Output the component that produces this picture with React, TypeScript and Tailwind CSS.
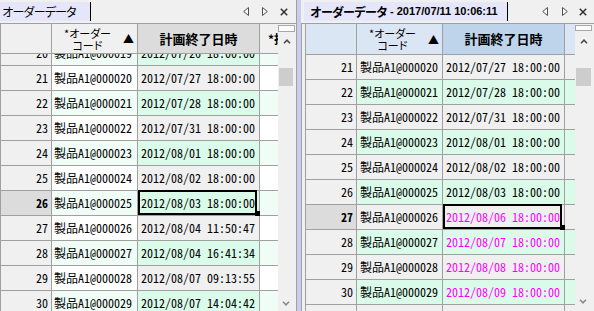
import React from "react";

const MONO = "font-['Noto_Sans_Mono_CJK_JP','Noto_Sans_CJK_JP',monospace]";
const JP = "font-['Noto_Sans_CJK_JP',sans-serif]";

type Row = { n: number; code: string; date: string; magenta?: boolean };

const leftRows: Row[] = [
  { n: 20, code: "製品A1@000019", date: "2012/07/26 18:00:00" },
  { n: 21, code: "製品A1@000020", date: "2012/07/27 18:00:00" },
  { n: 22, code: "製品A1@000021", date: "2012/07/28 18:00:00" },
  { n: 23, code: "製品A1@000022", date: "2012/07/31 18:00:00" },
  { n: 24, code: "製品A1@000023", date: "2012/08/01 18:00:00" },
  { n: 25, code: "製品A1@000024", date: "2012/08/02 18:00:00" },
  { n: 26, code: "製品A1@000025", date: "2012/08/03 18:00:00" },
  { n: 27, code: "製品A1@000026", date: "2012/08/04 11:50:47" },
  { n: 28, code: "製品A1@000027", date: "2012/08/04 16:41:34" },
  { n: 29, code: "製品A1@000028", date: "2012/08/07 09:13:55" },
  { n: 30, code: "製品A1@000029", date: "2012/08/07 14:04:42" },
];

const rightRows: Row[] = [
  { n: 21, code: "製品A1@000020", date: "2012/07/27 18:00:00" },
  { n: 22, code: "製品A1@000021", date: "2012/07/28 18:00:00" },
  { n: 23, code: "製品A1@000022", date: "2012/07/31 18:00:00" },
  { n: 24, code: "製品A1@000023", date: "2012/08/01 18:00:00" },
  { n: 25, code: "製品A1@000024", date: "2012/08/02 18:00:00" },
  { n: 26, code: "製品A1@000025", date: "2012/08/03 18:00:00" },
  { n: 27, code: "製品A1@000026", date: "2012/08/06 18:00:00", magenta: true },
  { n: 28, code: "製品A1@000027", date: "2012/08/07 18:00:00", magenta: true },
  { n: 29, code: "製品A1@000028", date: "2012/08/08 18:00:00", magenta: true },
  { n: 30, code: "製品A1@000029", date: "2012/08/09 18:00:00", magenta: true },
  { n: 31, code: "製品A1@000030", date: "2012/08/10 18:00:00", magenta: true },
];

function Chevron({ down, className }: { down?: boolean; className?: string }) {
  return (
    <svg width="8" height="5" viewBox="0 0 8 5" className={className}>
      {down ? (
        <polyline points="1,0.8 4,3.8 7,0.8" fill="none" stroke="#8a8a8a" strokeWidth="1.6" />
      ) : (
        <polyline points="1,4.2 4,1.2 7,4.2" fill="none" stroke="#4a4a4a" strokeWidth="1.6" />
      )}
    </svg>
  );
}

function VScroll({ right }: { right?: boolean }) {
  return (
    <div className="w-[17px] shrink-0 flex flex-col items-start bg-[#f0f0f0]">
      <div className={`mt-[1px] w-full border border-[#a8a8a8] bg-[#fbfbfb] ${right ? "h-[6px]" : "h-[7px]"}`} />
      <Chevron className={`${right ? "mt-[8px]" : "mt-[7px]"} ml-[5px]`} />
      <div className={`mt-[24px] ml-[1px] h-[18px] bg-[#cdcdcd] ${right ? "w-[15px]" : "w-[14px]"}`} />
      <div className="flex-1" />
      <Chevron down className={`${right ? "mb-[7px]" : "mb-[5px]"} ml-[4px]`} />
    </div>
  );
}

function TabButtons({ right }: { right?: boolean }) {
  return (
    <div className={`flex items-start mt-[7px] ${right ? "mr-[7px]" : "mr-[8px]"}`}>
      <svg width="6" height="9" viewBox="0 0 6 9">
        <polygon points="5.5,0.5 0.7,4.5 5.5,8.5" fill="#f8f8f8" stroke="#505050" strokeWidth="1" />
      </svg>
      <svg width="6" height="9" viewBox="0 0 6 9" className={right ? "ml-[14px]" : "ml-[13px]"}>
        <polygon points="0.5,0.5 5.3,4.5 0.5,8.5" fill="#f8f8f8" stroke="#505050" strokeWidth="1" />
      </svg>
      <svg width="8" height="8" viewBox="0 0 8 8" className={`mt-[1px] ${right ? "ml-[11px]" : "ml-[12px]"}`}>
        <line x1="0.8" y1="0.8" x2="7.2" y2="7.2" stroke="#303030" strokeWidth="1.5" />
        <line x1="7.2" y1="0.8" x2="0.8" y2="7.2" stroke="#303030" strokeWidth="1.5" />
      </svg>
    </div>
  );
}

function Grid({ right, rows, current }: { right?: boolean; rows: Row[]; current: number }) {
  const hNum = right ? "bg-[#dae6f3]" : "bg-[#f0f0f0]";
  const hDate = right ? "bg-[#bdd4eb]" : "bg-[#dcdcdc]";
  return (
    <div className={`${right ? "w-[270px]" : "w-[278px]"} shrink-0 flex flex-col border-l border-[#a0a0a0] overflow-hidden`}>
      <div className={`flex shrink-0 border-b border-[#a0a0a0] ${right ? "h-[31px]" : "h-[30px]"}`}>
        <div className={`w-[51px] shrink-0 border-r border-[#a0a0a0] ${hNum}`} />
        <div className={`w-[86px] shrink-0 border-r border-[#a0a0a0] flex items-center ${hNum} ${JP} text-black`}>
          <div className="w-[71px] flex flex-col items-center text-[11px] leading-[12px] [font-feature-settings:'palt']">
            <span>*オーダー</span>
            <span>コード</span>
          </div>
          <span className="text-[11px] leading-none">▲</span>
        </div>
        <div className={`w-[122px] shrink-0 border-r border-[#a0a0a0] flex items-center justify-center ${hDate} ${JP} text-[13px] font-bold text-black`}>
          計画終了日時
        </div>
        <div className={`flex-1 flex items-center overflow-hidden whitespace-nowrap pl-[8px] ${hNum} ${JP} text-[12px] font-bold text-black`}>
          {right ? "" : "*担当者"}
        </div>
      </div>
      <div className="flex-1 overflow-hidden">
        <div className={right ? "" : "mt-[-13px]"}>
          {rows.map((r) => {
            const even = r.n % 2 === 0;
            const cur = r.n === current;
            let codeBg: string, dateBg: string, extraBg: string;
            if (right) {
              codeBg = even ? "bg-[#dafbe9]" : "bg-[#f0f0f0]";
              dateBg = codeBg;
              extraBg = codeBg;
            } else {
              codeBg = even ? "bg-[#f0fdf6]" : "bg-white";
              dateBg = even ? "bg-[#dafbe9]" : "bg-[#f0f0f0]";
              extraBg = codeBg;
            }
            return (
              <div key={r.n} className={`flex h-[25px] border-b border-[#a0a0a0] ${MONO} text-[12px] leading-none text-black`}>
                <div
                  className={`w-[51px] shrink-0 border-r border-[#a0a0a0] flex items-center justify-end pr-[3px] ${
                    cur ? "bg-[#dcdcdc] font-bold" : "bg-[#f0f0f0]"
                  }`}
                >
                  {r.n}
                </div>
                <div className={`w-[86px] shrink-0 border-r border-[#a0a0a0] flex items-center whitespace-pre ${right ? "pl-[3px]" : "pl-[2px]"} ${codeBg}`}>
                  {r.code}
                </div>
                <div
                  className={`w-[122px] shrink-0 border-r border-[#a0a0a0] flex items-center whitespace-pre pl-[3px] relative ${dateBg} ${
                    r.magenta ? "text-[#ff00ff]" : "text-black"
                  }`}
                >
                  {r.date}
                  {cur && (
                    <>
                      <div className="absolute top-[-1px] left-0 right-[2px] bottom-0 border-2 border-black" />
                      <div className="absolute right-[-1px] bottom-[-1px] w-[5px] h-[5px] bg-black" />
                    </>
                  )}
                </div>
                <div className={`flex-1 ${extraBg}`} />
              </div>
            );
          })}
        </div>
      </div>
    </div>
  );
}

export default function App() {
  return (
    <div className="w-[594px] h-[311px] flex bg-[#f0f0f0] overflow-hidden">
      {/* Left panel */}
      <div className="w-[297px] shrink-0 flex flex-col border-r border-[#a0a0a0]">
        <div className="h-[23px] shrink-0 flex items-start">
          <div className={`mt-[2px] h-[19px] w-[91px] bg-[#e6e6fa] border-r border-black flex items-center pl-[2px] ${JP} text-[12px] tracking-[-1.4px] text-black`}>
            オーダーデータ
          </div>
          <div className="flex-1" />
          <TabButtons />
        </div>
        <div className="flex-1 min-h-0 flex border-t border-[#a0a0a0]">
          <Grid rows={leftRows} current={26} />
          <VScroll />
          <div className="w-[1px]" />
        </div>
      </div>
      {/* Active panel stripe */}
      <div className="w-[4px] shrink-0 bg-[#cbcbf2]" />
      {/* Right panel */}
      <div className="flex-1 flex flex-col">
        <div className="h-[23px] shrink-0 flex items-start pl-[3px]">
          <div className="mt-[2px] h-[19px] w-[204px] bg-[#e6e6fa] border-r border-black flex items-center pl-[6px] text-black whitespace-nowrap">
            <span className={`${JP} text-[12px] font-bold tracking-[-1px]`}>オーダーデータ</span>
            <span className="font-['Liberation_Sans',Arial,sans-serif] text-[11px] font-bold ml-[3px]"> - 2017/07/11 10:06:11</span>
          </div>
          <div className="flex-1" />
          <TabButtons right />
        </div>
        <div className="flex-1 min-h-0 flex border-t border-[#a0a0a0]">
          <div className="w-[4px] shrink-0 border-l border-[#a0a0a0]" />
          <Grid right rows={rightRows} current={27} />
          <VScroll right />
          <div className="flex-1" />
        </div>
      </div>
    </div>
  );
}
